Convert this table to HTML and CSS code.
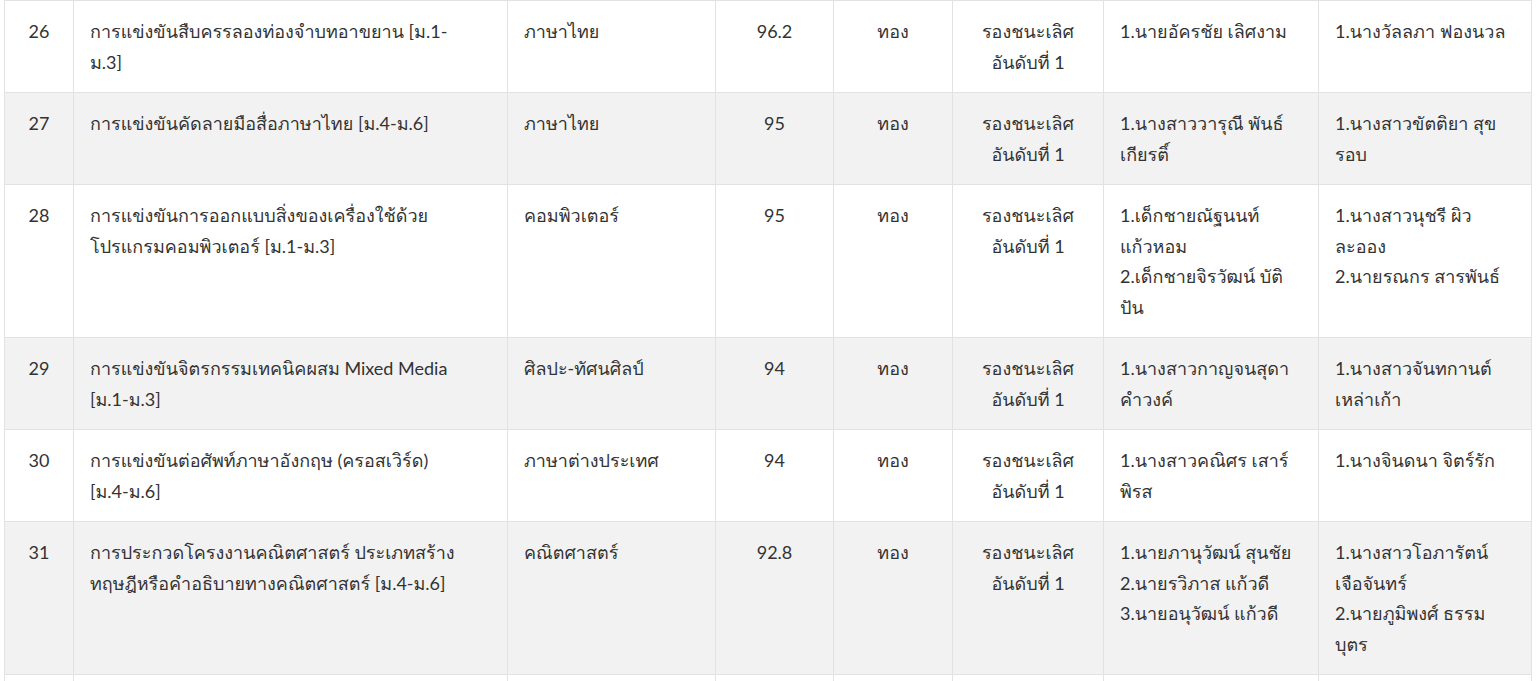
FILE: index.html
```html
<!DOCTYPE html>
<html lang="th">
<head>
<meta charset="utf-8">
<link rel="stylesheet" href="styles.css">
</head>
<body>
<table class="results">
  <colgroup>
    <col class="c-no"><col class="c-name"><col class="c-subj"><col class="c-score"><col class="c-medal"><col class="c-rank"><col class="c-student"><col class="c-teacher">
  </colgroup>
  <tbody>
    <tr>
      <td class="center">26</td>
      <td>การแข่งขันสืบครรลองท่องจำบทอาขยาน [ม.1-<br>ม.3]</td>
      <td>ภาษาไทย</td>
      <td class="center">96.2</td>
      <td class="center">ทอง</td>
      <td class="center">รองชนะเลิศ<br>อันดับที่ 1</td>
      <td>1.นายอัครชัย เลิศงาม</td>
      <td>1.นางวัลลภา ฟองนวล</td>
    </tr>
    <tr class="alt">
      <td class="center">27</td>
      <td>การแข่งขันคัดลายมือสื่อภาษาไทย [ม.4-ม.6]</td>
      <td>ภาษาไทย</td>
      <td class="center">95</td>
      <td class="center">ทอง</td>
      <td class="center">รองชนะเลิศ<br>อันดับที่ 1</td>
      <td>1.นางสาววารุณี พันธ์<br>เกียรติ์</td>
      <td>1.นางสาวขัตติยา สุข<br>รอบ</td>
    </tr>
    <tr>
      <td class="center">28</td>
      <td>การแข่งขันการออกแบบสิ่งของเครื่องใช้ด้วย<br>โปรแกรมคอมพิวเตอร์ [ม.1-ม.3]</td>
      <td>คอมพิวเตอร์</td>
      <td class="center">95</td>
      <td class="center">ทอง</td>
      <td class="center">รองชนะเลิศ<br>อันดับที่ 1</td>
      <td>1.เด็กชายณัฐนนท์<br>แก้วหอม<br>2.เด็กชายจิรวัฒน์ บัติ<br>ปัน</td>
      <td>1.นางสาวนุชรี ผิว<br>ละออง<br>2.นายรณกร สารพันธ์</td>
    </tr>
    <tr class="alt">
      <td class="center">29</td>
      <td>การแข่งขันจิตรกรรมเทคนิคผสม Mixed Media<br>[ม.1-ม.3]</td>
      <td>ศิลปะ-ทัศนศิลป์</td>
      <td class="center">94</td>
      <td class="center">ทอง</td>
      <td class="center">รองชนะเลิศ<br>อันดับที่ 1</td>
      <td>1.นางสาวกาญจนสุดา<br>คำวงค์</td>
      <td>1.นางสาวจันทกานต์<br>เหล่าเก้า</td>
    </tr>
    <tr>
      <td class="center">30</td>
      <td>การแข่งขันต่อศัพท์ภาษาอังกฤษ (ครอสเวิร์ด)<br>[ม.4-ม.6]</td>
      <td>ภาษาต่างประเทศ</td>
      <td class="center">94</td>
      <td class="center">ทอง</td>
      <td class="center">รองชนะเลิศ<br>อันดับที่ 1</td>
      <td>1.นางสาวคณิศร เสาร์<br>พิรส</td>
      <td>1.นางจินดนา จิตร์รัก</td>
    </tr>
    <tr class="alt">
      <td class="center">31</td>
      <td>การประกวดโครงงานคณิตศาสตร์ ประเภทสร้าง<br>ทฤษฎีหรือคำอธิบายทางคณิตศาสตร์ [ม.4-ม.6]</td>
      <td>คณิตศาสตร์</td>
      <td class="center">92.8</td>
      <td class="center">ทอง</td>
      <td class="center">รองชนะเลิศ<br>อันดับที่ 1</td>
      <td>1.นายภานุวัฒน์ สุนชัย<br>2.นายรวิภาส แก้วดี<br>3.นายอนุวัฒน์ แก้วดี</td>
      <td>1.นางสาวโอภารัตน์<br>เจือจันทร์<br>2.นายภูมิพงศ์ ธรรม<br>บุตร</td>
    </tr>
    <tr class="next">
      <td>&nbsp;</td>
      <td>&nbsp;</td>
      <td>&nbsp;</td>
      <td>&nbsp;</td>
      <td>&nbsp;</td>
      <td>&nbsp;</td>
      <td>&nbsp;</td>
      <td>&nbsp;</td>
    </tr>
  </tbody>
</table>
</body>
</html>
```

FILE: styles.css
```css
html, body {
  margin: 0;
  padding: 0;
  background: #ffffff;
}

body {
  font-family: "Lato", "Loma", "Noto Sans Thai Looped", sans-serif;
  font-size: 18px;
  color: #333333;
}

.results {
  border-collapse: collapse;
  table-layout: fixed;
  width: 1527px;
  margin-left: 4px;
}

.results td {
  border: 1px solid #e2e2e2;
  padding: 15px 16px 15px;
  line-height: 30.5px;
  vertical-align: top;
  text-align: left;
  white-space: nowrap;
}

.results td.center {
  text-align: center;
}

.results tr.alt td {
  background: #f2f2f2;
}

.c-no { width: 69px; }
.c-name { width: 434px; }
.c-subj { width: 208px; }
.c-score { width: 118px; }
.c-medal { width: 119px; }
.c-rank { width: 151px; }
.c-student { width: 215px; }
.c-teacher { width: 213px; }
```
